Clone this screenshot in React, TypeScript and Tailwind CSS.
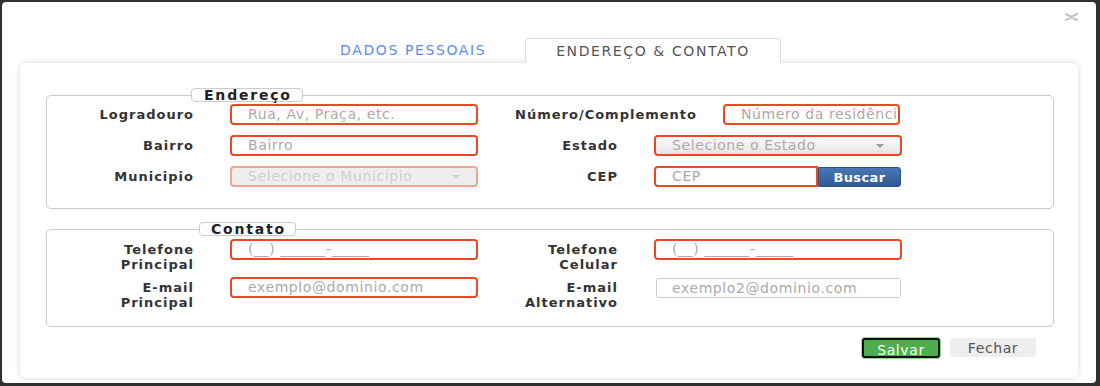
import React from "react";

const red = "border-[#e84a24]";

function Label({ children, width }: { children: React.ReactNode; width: string }) {
  return (
    <div className={`${width} shrink-0 pt-[3px] text-right text-[13px] leading-[15px] font-bold tracking-[1px] text-[#333]`}>
      {children}
    </div>
  );
}

function TextInput({ placeholder, className }: { placeholder: string; className: string }) {
  return (
    <input
      placeholder={placeholder}
      className={`h-[21px] shrink-0 rounded-[4px] border-2 ${red} bg-white pl-[16px] text-[14px] tracking-[0.6px] text-[#333] outline-none placeholder:text-[#aaa] ${className}`}
    />
  );
}

function SelectBox({ text, disabled }: { text: string; disabled?: boolean }) {
  return (
    <div
      className={
        disabled
          ? "ml-[36px] flex h-[21px] w-[248px] shrink-0 items-center justify-between rounded-[4px] border-2 border-[#f2a491] bg-[#eeeeee] pl-[16px] pr-[16px] text-[14px] tracking-[0.6px] text-[#cfcfcf]"
          : `ml-[36px] flex h-[21px] w-[248px] shrink-0 items-center justify-between rounded-[4px] border-2 ${red} bg-gradient-to-b from-white to-[#e4e4e4] pl-[16px] pr-[16px] text-[14px] tracking-[0.6px] text-[#aaa]`
      }
    >
      <span>{text}</span>
      <span
        className={
          disabled
            ? "h-0 w-0 border-x-[4px] border-t-[4px] border-x-transparent border-t-[#d0d0d0]"
            : "h-0 w-0 border-x-[4px] border-t-[4px] border-x-transparent border-t-[#999]"
        }
      />
    </div>
  );
}

export default function App() {
  return (
    <div className="h-[386px] w-[1100px] overflow-hidden bg-[#303030] pb-[3px] pl-[2px] pr-[4px] pt-[2px] font-['DejaVu_Sans',sans-serif]">
      <div className="relative h-full rounded-[4px] bg-white pl-[18px] pr-[18px] pt-[36px]">
        {/* close */}
        <svg className="absolute right-[18px] top-[11px]" width="13" height="8" viewBox="0 0 13 8">
          <path d="M1 1 L12 7 M1 7 L12 1" stroke="#c3c3c3" strokeWidth="2" strokeLinecap="round" />
        </svg>

        {/* tabs */}
        <div className="flex h-[25px] justify-center pr-[8px]">
          <div className="flex items-center px-[31px] text-[14px] tracking-[1.6px] text-[#5b8def]">DADOS PESSOAIS</div>
          <div className="relative z-10 ml-[8px] flex items-center rounded-t-[4px] border border-b-0 border-[#dddddd] bg-white px-[30px] text-[14px] tracking-[1.6px] text-[#555]">
            ENDEREÇO &amp; CONTATO
          </div>
        </div>

        {/* card */}
        <div className="h-[315px] rounded-[6px] bg-white pl-[26px] pr-[24px] pt-[25px] shadow-[0_0_6px_rgba(0,0,0,0.16)]">
          {/* Endereço */}
          <fieldset className="rounded-[5px] border border-[#cccccc] pb-[21px]">
            <legend className="ml-[144px] h-[14px] rounded-[4px] border border-[#cccccc] bg-white pl-[12px] pr-[10px] text-[14px] leading-[12px] font-bold tracking-[1.8px] text-[#222]">
              Endereço
            </legend>
            <div className="flex flex-col gap-[10px] pt-[2px]">
              <div className="flex items-start">
                <Label width="w-[147px]">Logradouro</Label>
                <TextInput placeholder="Rua, Av, Praça, etc." className="ml-[36px] w-[248px]" />
                <Label width="w-[219px]">Número/Complemento</Label>
                <TextInput placeholder="Número da residência" className="ml-[26px] w-[177px]" />
              </div>
              <div className="flex items-start">
                <Label width="w-[147px]">Bairro</Label>
                <TextInput placeholder="Bairro" className="ml-[36px] w-[248px]" />
                <Label width="w-[140px]">Estado</Label>
                <SelectBox text="Selecione o Estado" />
              </div>
              <div className="flex items-start">
                <Label width="w-[147px]">Municipio</Label>
                <SelectBox text="Selecione o Município" disabled />
                <Label width="w-[140px]">CEP</Label>
                <div className="ml-[36px] flex shrink-0">
                  <input
                    placeholder="CEP"
                    className={`h-[21px] w-[164px] rounded-l-[4px] border-2 ${red} bg-white pl-[16px] text-[14px] tracking-[0.6px] outline-none placeholder:text-[#aaa]`}
                  />
                  <button className="mt-[1px] h-[20px] w-[83px] rounded-r-[3px] border border-[#2c5286] bg-gradient-to-b from-[#4a78b5] to-[#2f5a93] text-[13px] font-bold tracking-[0.4px] text-white">
                    Buscar
                  </button>
                </div>
              </div>
            </div>
          </fieldset>

          {/* Contato */}
          <fieldset className="mt-[13px] rounded-[5px] border border-[#cccccc] pb-[16px]">
            <legend className="ml-[152px] h-[14px] rounded-[4px] border border-[#cccccc] bg-white pl-[11px] pr-[9px] text-[14px] leading-[12px] font-bold tracking-[1.8px] text-[#222]">
              Contato
            </legend>
            <div className="flex flex-col gap-[5px] pt-[3px]">
              <div className="flex items-start">
                <Label width="w-[147px]">
                  Telefone
                  <br />
                  Principal
                </Label>
                <TextInput placeholder="(__) ______-_____" className="ml-[36px] w-[248px]" />
                <Label width="w-[140px]">
                  Telefone
                  <br />
                  Celular
                </Label>
                <TextInput placeholder="(__) ______-_____" className="ml-[36px] w-[248px]" />
              </div>
              <div className="flex items-start">
                <Label width="w-[147px]">
                  E-mail
                  <br />
                  Principal
                </Label>
                <TextInput placeholder="exemplo@dominio.com" className="ml-[36px] w-[248px]" />
                <Label width="w-[140px]">
                  E-mail
                  <br />
                  Alternativo
                </Label>
                <input
                  placeholder="exemplo2@dominio.com"
                  className="ml-[38px] mt-[1px] h-[20px] w-[245px] shrink-0 rounded-[3px] border border-[#cccccc] bg-white pl-[15px] text-[14px] tracking-[0.6px] outline-none placeholder:text-[#aaa]"
                />
              </div>
            </div>
          </fieldset>

          {/* actions */}
          <div className="mt-[11px] flex justify-end gap-[10px] pr-[18px]">
            <button className="h-[20px] w-[78px] rounded-[3px] border-2 border-[#111] bg-[#4cae4c] text-[14px] tracking-[0.6px] text-white ring-1 ring-[#9bd49b]">
              Salvar
            </button>
            <button className="h-[19px] w-[86px] rounded-[3px] bg-[#eeeeee] text-[14px] tracking-[0.6px] text-[#555]">
              Fechar
            </button>
          </div>
        </div>
      </div>
    </div>
  );
}
